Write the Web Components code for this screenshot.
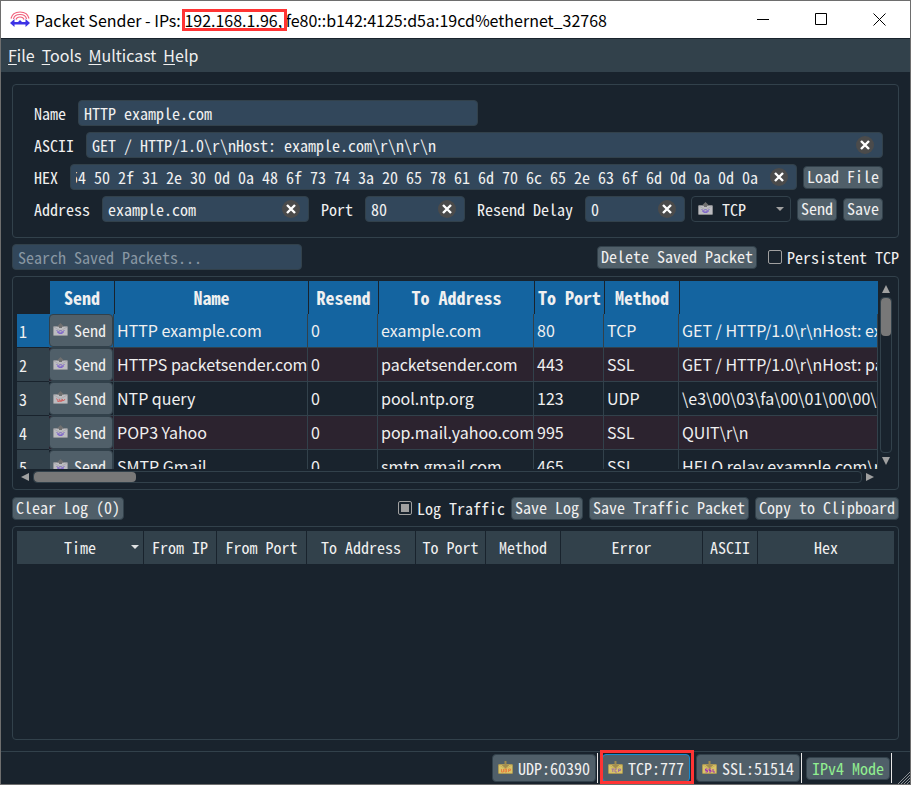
<!DOCTYPE html>
<html lang="en">
<head>
<meta charset="utf-8">
<title>Packet Sender</title>
<style>
  :root {
    --bg: #19232d;
    --line: #32414b;
    --field: #32475b;
    --button: #505f69;
    --blue: #1464a0;
    --text: #f0f0f0;
    --mono: "Noto Sans Mono CJK SC", "Liberation Mono", monospace;
    --sans: "Noto Sans CJK SC", "Open Sans", sans-serif;
  }
  body {
    margin: 0;
    color: var(--text);
    font: 16px/20px var(--mono);
  }
</style>
</head>
<body>
<packet-sender></packet-sender>

<script>
class BaseElement extends HTMLElement {
  connectedCallback() {
    if (this.shadowRoot) {
      return;
    }
    const shadowRoot = this.attachShadow({ mode: "open" });
    shadowRoot.innerHTML = `<style>* { box-sizing: border-box; }</style>` + this.render();
    this.ready(shadowRoot);
  }

  attr(name, fallback = "") {
    return this.getAttribute(name) ?? fallback;
  }

  ready() {}
}

// Envelope with an arrow: "tx" points up, "rx" points down
class PacketIcon extends BaseElement {
  render() {
    const rx = this.attr("kind") === "rx";
    const body = rx ? "#d8c468" : "#bcbcc0";
    const edge = rx ? "#b89c48" : "#98989c";
    const ink = { udp: "#e88040", tcp: "#a070a0", ssl: "#a030b0", red: "#d06060" }[this.attr("ink")] || "#8068c8";
    const arrow = rx
      ? `<path d="M6.500 0h2v4h3L7.500 7.500 3.500 4h3z" fill="#a08c50"/>`
      : `<path d="M7.500 0L11 3.500H9V5H6V3.500H4z" fill="#707070"/>`;
    const marks = {
      udp: "M3.500 8v3h2V8M7 8v3h1.500V8zM10.500 11V8h2v1.500h-2",
      tcp: "M3.500 8H6M4.800 8v3M9 8H7v3h2M10.500 11V8h2v1.500h-2",
      ssl: "M5.500 8h-2v1.500h2V11h-2M9 8H7v1.500h2V11H7M11 8v3h2",
      red: "M3.500 7.500l2 3M6 8l1 2h2V8l1.500 2 1.500-2M4.500 10.500l6-1",
    }[this.attr("ink")] || "M3.500 7.500l2 1 2-1 2 1 2-1M4 9l3 1 4-1M5.500 10.500h4";
    return `
      <style>
        :host { display: inline-block; width: 15px; height: 14px; flex: none; }
        svg { display: block; }
      </style>
      <svg width="15" height="14" viewBox="0 0 15 14" aria-hidden="true">
        <rect x=".5" y="3.500" width="14" height="9" rx=".5" fill="${body}" stroke="${edge}" stroke-width=".6"/>
        <path d="M1 4l6.500 4L14 4" fill="none" stroke="${edge}" stroke-width=".5"/>
        ${arrow}
        <path d="${marks}" fill="none" stroke="${ink}"/>
      </svg>
    `;
  }
}

class TitleBar extends BaseElement {
  render() {
    return `
      <style>
        :host {
          display: flex;
          align-items: center;
          flex: none;
          height: 38px;
          padding: 0 2px 0 9px;
          background: #fff;
          color: #000;
          font: 16px/20px var(--sans);
          border-bottom: 1px solid var(--bg);
        }
        h1 { flex: 1; margin: 0 0 0 5px; font: inherit; white-space: nowrap; }
        .mark { position: relative; }
        .mark::after {
          content: "";
          position: absolute;
          top: 50%;
          left: -2px;
          right: -1px;
          height: 16px;
          margin-top: -11px;
          border: 3px solid #ff3434;
        }
        button {
          width: 58px;
          height: 37px;
          padding: 0;
          border: 0;
          background: none;
        }
        button svg { display: block; margin: auto; }
      </style>
      <svg width="20" height="17" viewBox="0 0 20 17" aria-hidden="true">
        <g fill="none" stroke="#f0607c" stroke-width="1.200">
          <path d="M1 7.500C2 3 5 1 10 1s8 2 9 6.500"/>
          <path d="M3.500 8c.5-3 3-4.500 6.500-4.500S16 5 16.500 8"/>
          <path d="M6 8.500C6.500 6.500 8 6 10 6s3.500.5 4 2.500"/>
        </g>
        <path d="M0 12l4.500-4v3h11V8L20 12l-4.500 4v-2.500h-11V16z" fill="#3c32e6"/>
        <path d="M8 11l2-2 2 2z" fill="#3c32e6"/>
      </svg>
      <h1>Packet Sender - IPs: <span class="mark">192.168.1.96, </span>fe80::b142:4125:d5a:19cd%ethernet_32768</h1>
      <button aria-label="Minimize"><svg width="13" height="13"><path d="M0 6.500h12" stroke="#000"/></svg></button>
      <button aria-label="Maximize"><svg width="13" height="13"><path d="M.5.5h11v11H.5z" fill="none" stroke="#000"/></svg></button>
      <button aria-label="Close"><svg width="13" height="13"><path d="M.5.5l12 12m0-12l-12 12" stroke="#000"/></svg></button>
    `;
  }
}

class MenuBar extends BaseElement {
  render() {
    const items = ["File", "Tools", "Multicast", "Help"];
    return `
      <style>
        :host {
          display: flex;
          flex: none;
          gap: 7px;
          height: 33px;
          padding: 0 7px;
          background: var(--line);
        }
        button {
          padding: 0 0 2px;
          border: 0;
          background: none;
          color: var(--text);
          font: 16px/20px var(--sans);
        }
        u { text-underline-offset: 2px; }
      </style>
      ${items.map((item) => `<button><u>${item[0]}</u>${item.slice(1)}</button>`).join("")}
    `;
  }
}

class ToolButton extends BaseElement {
  render() {
    return `
      <style>
        :host { display: block; flex: none; }
        button {
          display: flex;
          align-items: center;
          gap: 6px;
          width: 100%;
          height: 23px;
          padding: 0 3px 2px;
          border: 1px solid var(--line);
          border-radius: 4px;
          background: var(--button);
          color: inherit;
          font: inherit;
          white-space: nowrap;
        }
        :host([wide]) button { gap: 5px; padding: 0 5px; }
        :host([tall]) button { height: 28px; }
        :host([cell]) button { height: 33px; }
        :host([active]) button { border-color: #148cd2; }
      </style>
      <button><slot></slot></button>
    `;
  }
}

class TextField extends BaseElement {
  render() {
    const clear = this.hasAttribute("clear")
      ? `<button aria-label="Clear ${this.attr("label")}">
           <svg width="18" height="18" viewBox="0 0 18 18">
             <circle cx="9" cy="9" r="9" fill="#4b4b4b"/>
             <path d="M5 5l8 8m0-8l-8 8" stroke="#fff" stroke-width="2.400"/>
           </svg>
         </button>`
      : "";
    return `
      <style>
        :host { display: flex; align-items: center; gap: 6px; min-width: 0; }
        :host([grow]) { flex: 1; }
        label { padding: 0 6px; white-space: nowrap; }
        .box {
          display: flex;
          align-items: center;
          flex: 1;
          width: ${this.attr("size", "100")}px;
          height: 26px;
          padding: 0 5px;
          border: 1px solid var(--line);
          border-radius: 4px;
          background: var(--field);
        }
        :host([clear]) .box { padding-right: 8px; }
        input {
          flex: 1;
          width: 0;
          height: 24px;
          padding: 0;
          border: 0;
          outline: 0;
          background: none;
          color: inherit;
          font: inherit;
        }
        input::placeholder { color: #8997a3; }
        button { flex: none; margin-left: 4px; padding: 0; border: 0; background: none; }
        svg { display: block; }
      </style>
      ${this.hasAttribute("label") ? `<label for="field">${this.attr("label")}</label>` : ""}
      <div class="box">
        <input id="field" type="text" spellcheck="false">
        ${clear}
      </div>
    `;
  }

  ready(root) {
    const input = root.querySelector("input");
    input.value = this.attr("value");
    if (this.hasAttribute("placeholder")) {
      input.placeholder = this.attr("placeholder");
      input.setAttribute("aria-label", this.attr("placeholder"));
    }
    if (this.hasAttribute("scroll-end")) {
      requestAnimationFrame(() => {
        input.scrollLeft = input.scrollWidth;
      });
    }
    root.querySelector("button")?.addEventListener("click", () => {
      input.value = "";
    });
  }
}

class MethodSelect extends BaseElement {
  render() {
    return `
      <style>
        :host { display: block; position: relative; width: 100px; flex: none; }
        select {
          width: 100%;
          height: 26px;
          padding: 0 0 0 30px;
          appearance: none;
          border: 1px solid var(--line);
          border-radius: 4px;
          background: var(--bg);
          color: inherit;
          font: inherit;
        }
        packet-icon { position: absolute; left: 7px; top: 6px; pointer-events: none; }
        .arrow {
          position: absolute;
          right: 7px;
          top: 11px;
          border: 4px solid transparent;
          border-top-color: #a0a0a0;
          border-bottom: 0;
          pointer-events: none;
        }
      </style>
      <select aria-label="Method"><option>TCP</option><option>UDP</option><option>SSL</option></select>
      <packet-icon></packet-icon>
      <span class="arrow"></span>
    `;
  }
}

class CheckField extends BaseElement {
  render() {
    return `
      <style>
        :host { display: block; flex: none; }
        label { display: flex; align-items: center; gap: 5px; white-space: nowrap; }
        input {
          width: 14px;
          height: 14px;
          margin: 0;
          appearance: none;
          border: 1px solid #a0a0a0;
          border-radius: 2px;
        }
        input:checked { background: #a0a0a0 content-box; padding: 2px; }
      </style>
      <label><input type="checkbox" ${this.hasAttribute("checked") ? "checked" : ""}><slot></slot></label>
    `;
  }
}

class ScrollTrack extends BaseElement {
  render() {
    return `
      <style>
        :host { display: flex; align-items: center; }
        :host([vertical]) { flex-direction: column; }
        button {
          display: grid;
          place-items: center;
          flex: none;
          width: 16px;
          height: 16px;
          padding: 0;
          border: 0;
          background: none;
        }
        svg { display: block; fill: #a0a0a0; }
        .track {
          flex: 1;
          height: 12px;
          border: 1px solid var(--line);
          border-radius: 4px;
        }
        .handle { width: 102px; height: 100%; border-radius: 4px; background: #787878; }
        :host([vertical]) .track { width: 12px; height: auto; }
        :host([vertical]) .handle { width: 100%; height: 38px; }
        :host([vertical]) svg { rotate: 90deg; }
      </style>
      <button aria-label="Scroll back"><svg width="8" height="8"><path d="M8 0v8L0 4z"/></svg></button>
      <div class="track"><div class="handle"></div></div>
      <button aria-label="Scroll forward"><svg width="8" height="8"><path d="M0 0v8l8-4z"/></svg></button>
    `;
  }
}

const packets = [
  ["HTTP example.com", "0", "example.com", "80", "TCP", "GET / HTTP/1.0\\r\\nHost: example.com\\r\\n\\r\\n"],
  ["HTTPS packetsender.com", "0", "packetsender.com", "443", "SSL", "GET / HTTP/1.0\\r\\nHost: packetsender.com\\r\\n\\r\\n"],
  ["NTP query", "0", "pool.ntp.org", "123", "UDP", "\\e3\\00\\03\\fa\\00\\01\\00\\00\\00\\01\\00\\00"],
  ["POP3 Yahoo", "0", "pop.mail.yahoo.com", "995", "SSL", "QUIT\\r\\n"],
  ["SMTP Gmail", "0", "smtp.gmail.com", "465", "SSL", "HELO relay.example.com\\r\\n"],
];

class SavedTable extends BaseElement {
  render() {
    const rows = packets.map((cells, i) => `
      <tr class="${i === 0 ? "selected" : ""}">
        <th scope="row">${i + 1}</th>
        <td class="send"><tool-button cell><packet-icon ink="${cells[4] === "UDP" ? "red" : ""}"></packet-icon>Send</tool-button></td>
        ${cells.map((cell) => `<td>${cell}</td>`).join("")}
      </tr>
    `);
    return `
      <style>
        :host {
          display: grid;
          grid-template: minmax(0, 1fr) 16px / minmax(0, 1fr) 16px;
          padding: 4px;
          border: 1px solid var(--line);
          border-radius: 4px;
        }
        .view { overflow: hidden; }
        table { width: 100%; border-collapse: separate; border-spacing: 0; table-layout: fixed; }
        th, td { height: 34px; padding: 0 3px 2px; white-space: nowrap; overflow: hidden; text-align: left; }
        thead th {
          height: 33px;
          padding: 0 0 2px;
          border-left: 1px solid var(--bg);
          background: var(--blue);
          text-align: center;
          font-size: 18px;
          font-weight: bold;
        }
        thead td { height: 33px; padding: 0; }
        tbody th {
          padding: 0 2px;
          border-bottom: 1px solid var(--bg);
          background: var(--line);
          font-weight: normal;
        }
        tbody td {
          border-right: 1px solid var(--line);
          border-bottom: 1px solid var(--line);
          font: 16px/20px var(--sans);
        }
        tbody tr:nth-child(even) td { background: #2c232f; }
        tbody tr.selected > * { background: var(--blue); }
        tbody td.send { padding: 0; font: inherit; }
      </style>
      <div class="view">
        <table>
          <colgroup>
            <col style="width: 32px"><col style="width: 65px"><col style="width: 194px"><col style="width: 70px">
            <col style="width: 156px"><col style="width: 70px"><col style="width: 75px"><col>
          </colgroup>
          <thead>
            <tr><td></td><th>Send</th><th>Name</th><th>Resend</th><th>To Address</th><th>To Port</th><th>Method</th><th></th></tr>
          </thead>
          <tbody>${rows.join("")}</tbody>
        </table>
      </div>
      <scroll-track vertical></scroll-track>
      <scroll-track></scroll-track>
    `;
  }
}

class LogTable extends BaseElement {
  render() {
    return `
      <style>
        :host { display: block; padding: 4px; border: 1px solid var(--line); border-radius: 4px; }
        table { width: 100%; border-collapse: separate; border-spacing: 0; table-layout: fixed; }
        th {
          position: relative;
          height: 33px;
          padding: 0 0 2px;
          border-left: 1px solid var(--bg);
          background: var(--line);
          font-weight: normal;
          white-space: nowrap;
        }
        th:first-child { border-left: 0; }
        th i {
          position: absolute;
          right: 4px;
          top: 14px;
          border: 4px solid transparent;
          border-top-color: #dfe1e2;
          border-bottom: 0;
        }
      </style>
      <table>
        <colgroup>
          <col style="width: 126px"><col style="width: 73px"><col style="width: 90px"><col style="width: 109px">
          <col style="width: 70px"><col style="width: 75px"><col style="width: 142px"><col style="width: 55px"><col>
        </colgroup>
        <thead>
          <tr>
            <th aria-sort="descending">Time<i></i></th><th>From IP</th><th>From Port</th><th>To Address</th><th>To Port</th>
            <th>Method</th><th>Error</th><th>ASCII</th><th>Hex</th>
          </tr>
        </thead>
      </table>
    `;
  }
}

class StatusBar extends BaseElement {
  render() {
    return `
      <style>
        :host {
          display: flex;
          align-items: center;
          justify-content: flex-end;
          flex: none;
          gap: 4px;
          height: 33px;
          padding-right: 18px;
          border-top: 1px solid var(--line);
          position: relative;
        }
        .item {
          display: flex;
          align-items: center;
          height: 30px;
          padding-right: 1px;
          border-right: 1px solid #e8e8e8;
          position: relative;
        }
        .mark::after {
          content: "";
          position: absolute;
          inset: -3px -3px -1px -2px;
          border: 3px solid #ff3434;
        }
        .mode { color: #90ee90; }
        .grip { position: absolute; right: 0; bottom: 0; }
      </style>
      <div class="item"><tool-button wide tall><packet-icon kind="rx" ink="udp"></packet-icon>UDP:60390</tool-button></div>
      <div class="item mark"><tool-button wide tall active><packet-icon kind="rx" ink="tcp"></packet-icon>TCP:777</tool-button></div>
      <div class="item"><tool-button wide tall><packet-icon kind="rx" ink="ssl"></packet-icon>SSL:51514</tool-button></div>
      <div class="item"><tool-button wide class="mode">IPv4 Mode</tool-button></div>
      <svg class="grip" width="12" height="12" aria-hidden="true">
        <path d="M0 12L12 0M3 12l9-9M6 12l6-6M9 12l3-3" stroke="#8a8f93"/>
      </svg>
    `;
  }
}

class PacketSender extends BaseElement {
  render() {
    return `
      <style>
        :host {
          display: flex;
          flex-direction: column;
          height: 100vh;
          min-height: 600px;
          border: 1px solid #6e6e6e;
          background: var(--bg);
          box-sizing: border-box;
          overflow: hidden;
        }
        main {
          display: flex;
          flex-direction: column;
          flex: 1;
          gap: 6px;
          min-height: 0;
          padding: 12px 11px 11px;
        }
        form {
          display: flex;
          flex-direction: column;
          gap: 6px;
          margin: 0;
          padding: 15px;
          border: 1px solid var(--line);
          border-radius: 4px;
        }
        .row { display: flex; align-items: center; gap: 6px; }
        .log { height: 24px; }
        .space { flex: 1; }
        .persistent { margin-left: 5px; }
        saved-table, log-table { flex: 1 1 0; min-height: 0; }
      </style>
      <title-bar></title-bar>
      <menu-bar></menu-bar>
      <main>
        <form onsubmit="return false">
          <div class="row"><text-field label="Name" size="400" value="HTTP example.com"></text-field></div>
          <div class="row"><text-field grow clear label="ASCII" value="GET / HTTP/1.0\\r\\nHost: example.com\\r\\n\\r\\n"></text-field></div>
          <div class="row">
            <text-field grow clear scroll-end label="HEX" value="47 45 54 20 2f 20 48 54 54 50 2f 31 2e 30 0d 0a 48 6f 73 74 3a 20 65 78 61 6d 70 6c 65 2e 63 6f 6d 0d 0a 0d 0a "></text-field>
            <tool-button>Load File</tool-button>
          </div>
          <div class="row">
            <text-field grow clear label="Address" value="example.com"></text-field>
            <text-field clear label="Port" value="80"></text-field>
            <text-field clear label="Resend Delay" value="0"></text-field>
            <method-select></method-select>
            <tool-button>Send</tool-button>
            <tool-button>Save</tool-button>
          </div>
        </form>
        <div class="row">
          <text-field size="290" placeholder="Search Saved Packets..."></text-field>
          <span class="space"></span>
          <tool-button>Delete Saved Packet</tool-button>
          <check-field class="persistent">Persistent TCP</check-field>
        </div>
        <saved-table></saved-table>
        <div class="row log">
          <tool-button>Clear Log (0)</tool-button>
          <span class="space"></span>
          <check-field checked>Log Traffic</check-field>
          <tool-button>Save Log</tool-button>
          <tool-button>Save Traffic Packet</tool-button>
          <tool-button>Copy to Clipboard</tool-button>
        </div>
        <log-table></log-table>
      </main>
      <status-bar></status-bar>
    `;
  }
}

customElements.define("packet-icon", PacketIcon);
customElements.define("title-bar", TitleBar);
customElements.define("menu-bar", MenuBar);
customElements.define("tool-button", ToolButton);
customElements.define("text-field", TextField);
customElements.define("method-select", MethodSelect);
customElements.define("check-field", CheckField);
customElements.define("scroll-track", ScrollTrack);
customElements.define("saved-table", SavedTable);
customElements.define("log-table", LogTable);
customElements.define("status-bar", StatusBar);
customElements.define("packet-sender", PacketSender);
</script>
</body>
</html>
